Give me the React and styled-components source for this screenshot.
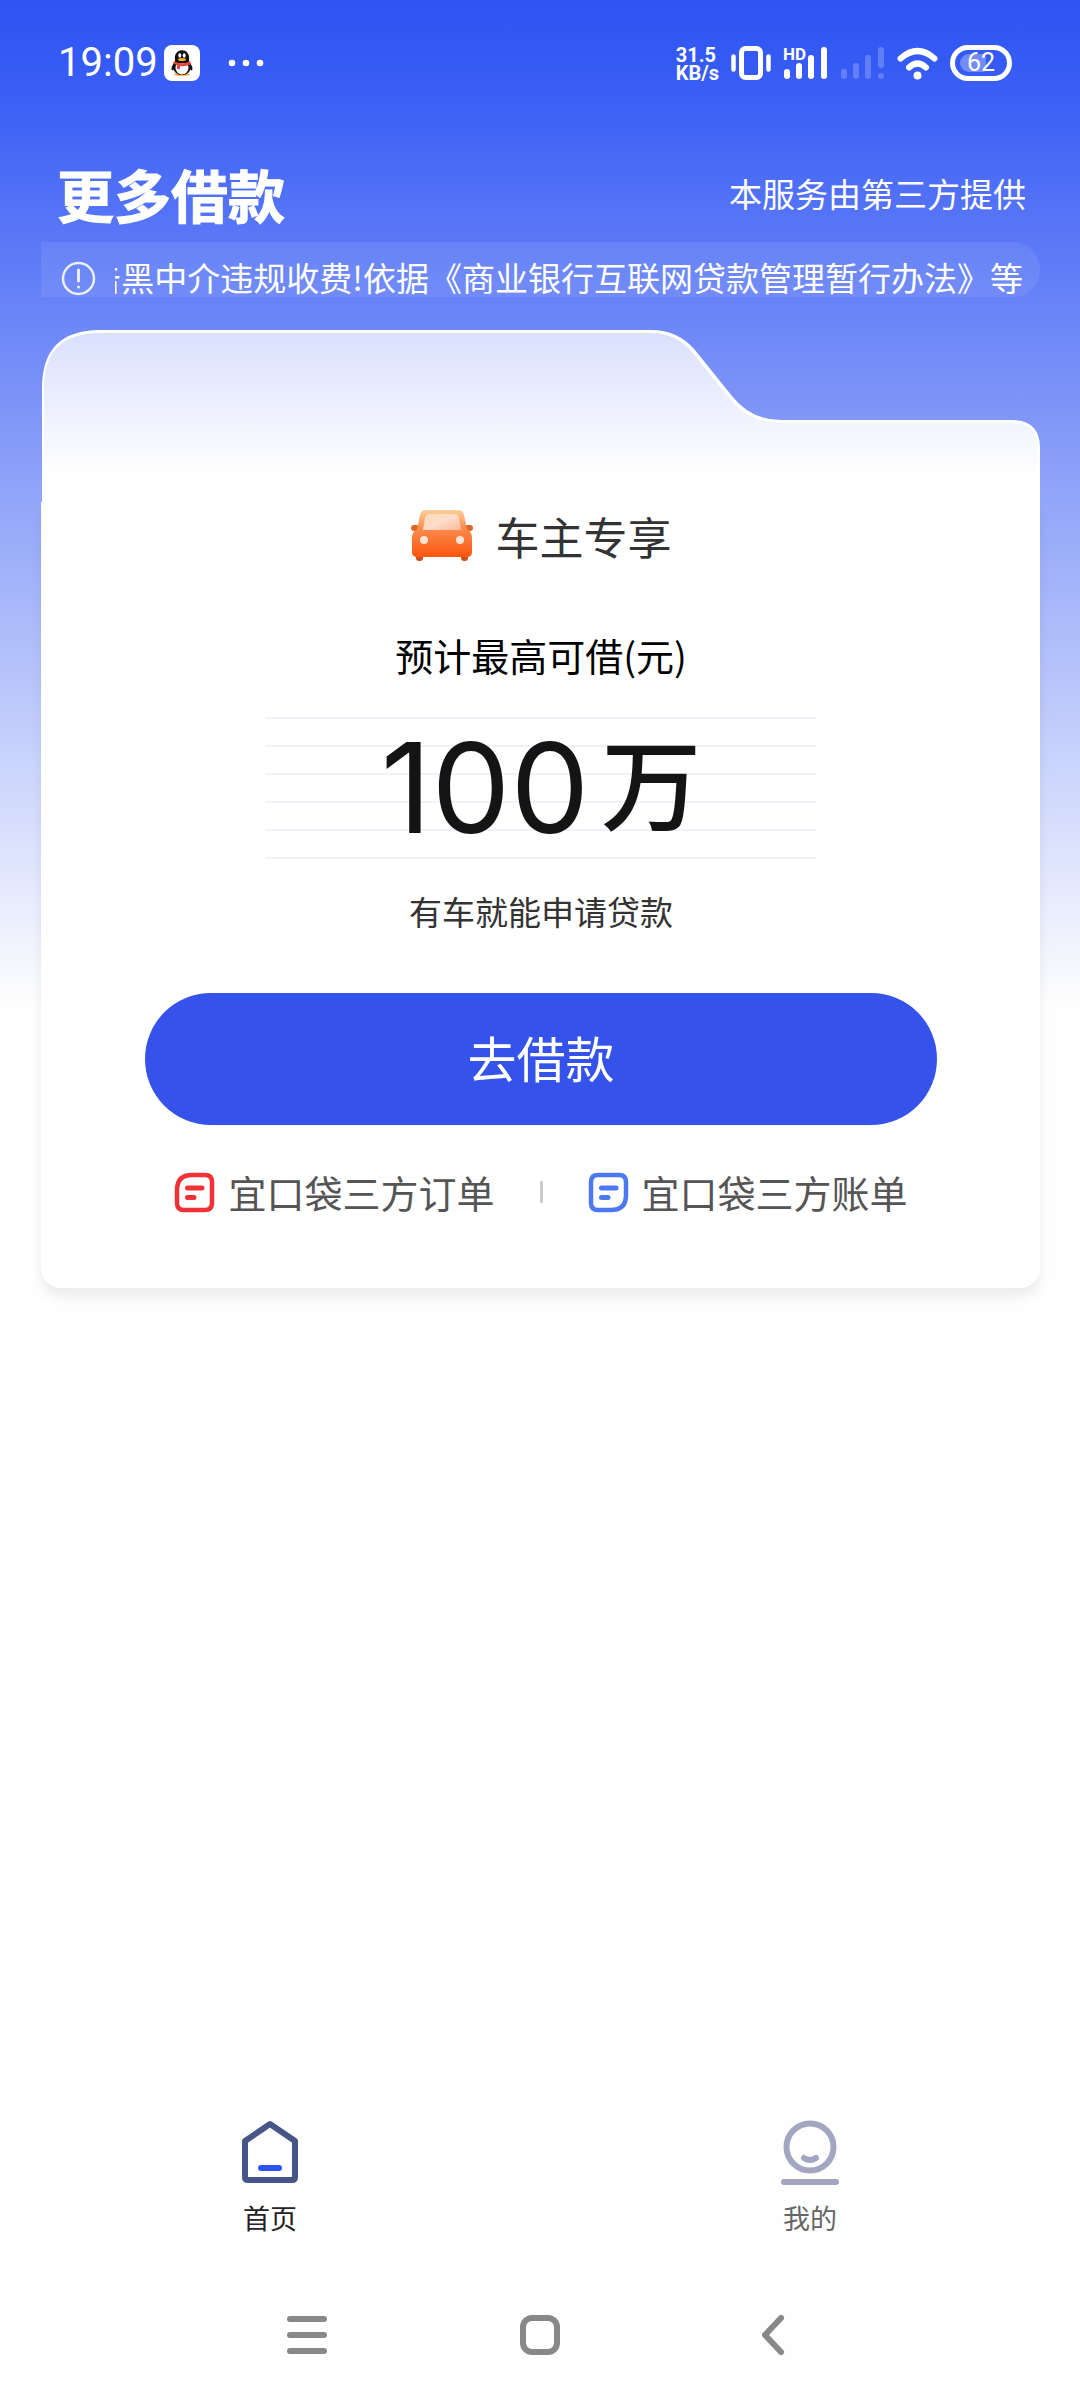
import styled, { createGlobalStyle } from "styled-components";

const GlobalStyle = createGlobalStyle`
	* {
		box-sizing: border-box;
	}

	body {
		margin: 0;
		font-family: "Noto Sans CJK SC", "Noto Sans", sans-serif;
		background-color: #fefefe;
	}

	button {
		border: none;
		padding: 0;
		background: none;
		font-family: inherit;
		cursor: pointer;
	}

	svg {
		display: block;
	}
`;

const Page = styled.div`
	min-height: 100vh;
	display: flex;
	flex-direction: column;
	background: linear-gradient(#2d54f2 0, #385cf5 80px, #fefefe 1006px);
`;

/* Status bar */

const StatusBar = styled.div`
	display: flex;
	justify-content: space-between;
	align-items: center;
	height: 126px;
	padding: 0 68px 0 58px;
	font-family: Roboto, sans-serif;
	color: #fff;
`;

const StatusGroup = styled.div`
	display: flex;
	align-items: center;
	gap: ${(props) => props.$gap}px;
`;

const Time = styled.span`
	font-size: 40px;
	line-height: 48px;
`;

const Speed = styled.div`
	display: flex;
	flex-direction: column;
	padding-top: 2px;
	font-size: 20px;
	font-weight: 700;
	line-height: 18px;
`;

const Signal = styled.div`
	position: relative;
`;

const HdBadge = styled.span`
	position: absolute;
	top: 0;
	left: 0;
	font-size: 17px;
	font-weight: 700;
	line-height: 18px;
`;

const Battery = styled.div`
	position: relative;
	display: flex;
	align-items: center;
	justify-content: center;
	width: 62px;
	height: 36px;
	border: 5px solid #fff;
	border-radius: 18px;
	font-size: 25px;
	line-height: 26px;

	&::before {
		content: "";
		position: absolute;
		top: 4px;
		bottom: 4px;
		left: 5px;
		width: 26px;
		border-radius: 9px 4px 4px 9px;
		background-color: rgba(255, 255, 255, 0.3);
	}
`;

/* Header */

const Header = styled.header`
	display: flex;
	justify-content: space-between;
	align-items: center;
	height: 116px;
	padding: 18px 54px 0 57px;
	color: #fff;
`;

const Title = styled.h1`
	margin: 0;
	font-size: 57px;
	font-weight: 700;
	line-height: 64px;
	-webkit-text-stroke: 1px #fff;
`;

const Provider = styled.span`
	font-size: 33px;
	line-height: 48px;
`;

const Notice = styled.div`
	display: flex;
	align-items: center;
	gap: 19px;
	height: 55px;
	margin: 0 40px 33px 41px;
	padding: 18px 17px 0 20px;
	border-radius: 0 28px 28px 0;
	background-color: rgba(255, 255, 255, 0.08);
	color: #fff;

	svg {
		flex-shrink: 0;
	}
`;

const Marquee = styled.div`
	flex: 1;
	display: flex;
	justify-content: flex-end;
	padding-bottom: 4px;
	overflow: hidden;
	font-size: 33px;
	line-height: 36px;
	white-space: nowrap;
`;

/* Card */

const Card = styled.section`
	margin: 0 40px 0 41px;
`;

const FolderTop = styled.svg`
	width: 100%;
	height: auto;
`;

const CardBody = styled.div`
	display: flex;
	flex-direction: column;
	align-items: center;
	padding: 6px 103px 68px 104px;
	border-radius: 0 0 20px 20px;
	background-color: #fff;
	box-shadow: 0 9px 12px rgba(0, 0, 0, 0.07);
`;

const Product = styled.h2`
	display: flex;
	align-items: center;
	gap: 23px;
	margin: 0;
	font-size: 44px;
	font-weight: 400;
	line-height: 56px;
	color: #333;
`;

const Caption = styled.p`
	margin: 63px 0 34px;
	font-size: 38px;
	line-height: 56px;
	color: #000;
`;

const AmountBox = styled.div`
	display: flex;
	justify-content: center;
	align-items: flex-start;
	gap: 12px;
	width: 550px;
	height: 142px;
	background: repeating-linear-gradient(#f1f1fb 0 2px, transparent 2px 28px);
	color: #141414;
`;

const Amount = styled.span`
	font-family: "Inter", sans-serif;
	font-size: 125px;
	line-height: 142px;
`;

const Unit = styled.span`
	font-size: 100px;
	font-weight: 500;
	line-height: 126px;
`;

const Hint = styled.p`
	margin: 28px 0 58px;
	font-size: 33px;
	line-height: 48px;
	color: #333;
`;

const PrimaryButton = styled.button`
	width: 100%;
	height: 132px;
	padding-bottom: 6px;
	border-radius: 66px;
	background-color: #3553eb;
	font-size: 49px;
	color: #fff;
`;

const Links = styled.div`
	display: flex;
	align-items: center;
	gap: 45px;
	margin-top: 39px;
`;

const RecordLink = styled.a`
	display: flex;
	align-items: center;
	gap: 13px;
	font-size: 38px;
	line-height: 56px;
	color: #555;
	text-decoration: none;
`;

const Divider = styled.span`
	width: 3px;
	height: 22px;
	background-color: #ccc;
`;

/* Bottom bars */

const TabBar = styled.nav`
	display: flex;
	margin-top: auto;
	padding-bottom: 79px;
`;

const Tab = styled.a`
	flex: 1;
	display: flex;
	flex-direction: column;
	align-items: center;
	gap: 14px;
	font-size: 27px;
	line-height: 36px;
	color: ${(props) => (props.$active ? "#222" : "#666")};
	text-decoration: none;
`;

const SystemNav = styled.div`
	display: flex;
	justify-content: center;
	gap: 193px;
	padding-bottom: 45px;
`;

// x and top of each signal bar
const bars = [
	[4, 25],
	[16, 19],
	[28, 11],
	[41, 3],
];

function QQIcon() {
	return (
		<svg width="36" height="36" viewBox="0 0 36 36">
			<rect width="36" height="36" rx="8" fill="#fff" />
			<ellipse cx="18" cy="29.5" rx="8" ry="1.5" fill="#f5a623" />
			<path d="M10 18C7 22 7 25 8.5 25.5L11 23ZM26 18c3 4 3 7 1.5 7.5L25 23Z" fill="#111" />
			<ellipse cx="18" cy="22" rx="9" ry="8" fill="#111" />
			<ellipse cx="18" cy="23" rx="6.5" ry="6.5" fill="#fff" />
			<path d="M11 15c-2-13 16-13 14 0v3H11Z" fill="#111" />
			<ellipse cx="15.8" cy="10.5" rx="1.5" ry="2.2" fill="#fff" />
			<ellipse cx="20.2" cy="10.5" rx="1.5" ry="2.2" fill="#fff" />
			<ellipse cx="18" cy="14.5" rx="4" ry="1.5" fill="#f5b01e" />
			<path d="M10 16c5 3 11 3 16 0l1 3c-4 2-8 2.5-11 2v3h-3v-4l-4-1.5Z" fill="#e8433c" />
		</svg>
	);
}

function CarIcon() {
	return (
		<svg width="62" height="52" viewBox="0 0 62 52">
			<defs>
				<linearGradient id="car" x1="0" y1="0" x2="0" y2="1">
					<stop offset="0" stopColor="#fbcf9b" />
					<stop offset="0.4" stopColor="#fb8a4c" />
					<stop offset="1" stopColor="#fd5510" />
				</linearGradient>
				<linearGradient id="glass" x1="0" y1="0" x2="1" y2="1">
					<stop offset="0" stopColor="#fbdcb8" />
					<stop offset="0.5" stopColor="#fddccb" />
					<stop offset="1" stopColor="#fcb999" />
				</linearGradient>
			</defs>
			<rect x="5" y="42" width="7" height="9" rx="3" fill="#c9521f" />
			<rect x="50" y="42" width="7" height="9" rx="3" fill="#c9521f" />
			<rect x="0" y="15" width="10" height="6" rx="3" fill="#e0632b" />
			<rect x="52" y="15" width="10" height="6" rx="3" fill="#e0632b" />
			<path d="M15 0h32q5 0 6 5l3 14q5 3 5 9v14q0 5-5 5H6q-5 0-5-5V28q0-6 5-9l3-14q1-5 6-5Z" fill="url(#car)" />
			<path d="M19 4h24q4 0 5 4l2 12H12l2-12q1-4 5-4Z" fill="url(#glass)" />
			<circle cx="13" cy="30" r="4" fill="#ffe4d2" />
			<circle cx="49" cy="30" r="4" fill="#ffe4d2" />
		</svg>
	);
}

function BillIcon({ color, flip }) {
	return (
		<svg width="41" height="41" viewBox="0 0 41 41" fill="none" stroke={color} strokeLinecap="round">
			<path
				d="M18 3h13q7 0 7 7v21q0 7-7 7H10q-7 0-7-7V18Q3 3 18 3Z"
				strokeWidth="4.5"
				transform={flip ? "rotate(180 20.5 20.5)" : undefined}
			/>
			<path d="M13.5 16H28M13.5 25.5H20" strokeWidth="5" />
		</svg>
	);
}

function App() {
	return (
		<>
			<GlobalStyle />
			<Page>
				<StatusBar>
					<StatusGroup $gap={6}>
						<Time>19:09</Time>
						<QQIcon />
						<svg width="60" height="8" viewBox="0 0 60 8" fill="#fff">
							<circle cx="26" cy="4" r="3.3" />
							<circle cx="40" cy="4" r="3.3" />
							<circle cx="54" cy="4" r="3.3" />
						</svg>
					</StatusGroup>
					<StatusGroup $gap={12}>
						<Speed>
							<span>31.5</span>
							<span>KB/s</span>
						</Speed>
						<svg width="40" height="36" viewBox="0 0 40 36" fill="none" stroke="#fff" strokeLinecap="round">
							<rect x="10.5" y="3.5" width="19" height="29" rx="4" strokeWidth="5" />
							<path d="M2.5 11.5v13M37.5 11.5v13" strokeWidth="4.5" />
						</svg>
						<Signal>
							<HdBadge>HD</HdBadge>
							<svg width="45" height="36" viewBox="0 0 45 36" stroke="#fff" strokeWidth="6" strokeLinecap="round">
								{bars.map(([x, y]) => (
									<path key={x} d={`M${x} ${y + 2}V31`} />
								))}
							</svg>
						</Signal>
						<svg width="45" height="36" viewBox="0 0 45 36" stroke="#fff" strokeWidth="6" strokeLinecap="round" opacity="0.22">
							<path d="M4 27v4M16 21v10M28 13v18M41 5v15M41 31v0" />
						</svg>
						<svg width="41" height="36" viewBox="0 0 41 36" fill="none" stroke="#fff" strokeWidth="6" strokeLinecap="round">
							<path d="M3.5 13.5q17-15 34 0M12 22.5q8.5-8 17 0" />
							<circle cx="20.5" cy="30.5" r="4" fill="#fff" stroke="none" />
						</svg>
						<Battery>62</Battery>
					</StatusGroup>
				</StatusBar>

				<Header>
					<Title>更多借款</Title>
					<Provider>本服务由第三方提供</Provider>
				</Header>

				<Notice>
					<svg width="35" height="35" viewBox="0 0 35 35" fill="none" stroke="#fff" strokeOpacity="0.85" strokeLinecap="round">
						<circle cx="17.5" cy="17.5" r="15.5" strokeWidth="2.5" />
						<path d="M17.5 9v11M17.5 26v0" strokeWidth="3" />
					</svg>
					<Marquee>
						<span>击黑中介违规收费!依据《商业银行互联网贷款管理暂行办法》等</span>
					</Marquee>
				</Notice>

				<Card>
					<FolderTop viewBox="0 0 999 172">
						<defs>
							<linearGradient id="folder" x1="0" y1="0" x2="0" y2="1">
								<stop offset="0" stopColor="#dae0fd" />
								<stop offset="0.85" stopColor="#fff" />
							</linearGradient>
						</defs>
						<path
							d="M1 172V58Q1 0 59 0H610Q637 0 654 20L691 66Q710 90 740 90H971Q999 90 999 118V172Z"
							fill="#fff"
						/>
						<path
							d="M3 172V58Q3 3 59 3H610Q635 3 651 22L688 68Q708 93 740 93H971Q997 93 997 118V172Z"
							fill="url(#folder)"
						/>
					</FolderTop>
					<CardBody>
						<Product>
							<CarIcon />
							车主专享
						</Product>
						<Caption>预计最高可借(元)</Caption>
						<AmountBox>
							<Amount>100</Amount>
							<Unit>万</Unit>
						</AmountBox>
						<Hint>有车就能申请贷款</Hint>
						<PrimaryButton type="button">去借款</PrimaryButton>
						<Links>
							<RecordLink href="#orders">
								<BillIcon color="#f03237" />
								宜口袋三方订单
							</RecordLink>
							<Divider />
							<RecordLink href="#bills">
								<BillIcon color="#4c78f0" flip />
								宜口袋三方账单
							</RecordLink>
						</Links>
					</CardBody>
				</Card>

				<TabBar>
					<Tab href="#home" $active>
						<svg width="60" height="66" viewBox="0 0 60 66" fill="none" strokeWidth="6" strokeLinecap="round" strokeLinejoin="round">
							<path d="M30 4L5 21V57q0 3 3 3H52q3 0 3-3V21Z" stroke="#475687" />
							<path d="M21 48H39" stroke="#2f54f5" />
						</svg>
						首页
					</Tab>
					<Tab href="#mine">
						<svg width="60" height="66" viewBox="0 0 60 66" fill="none" stroke="#a3a6c0" strokeWidth="6" strokeLinecap="round">
							<circle cx="30" cy="27" r="23.5" />
							<path d="M24 38q6 4 12 0M4 62H56" />
						</svg>
						我的
					</Tab>
				</TabBar>

				<SystemNav>
					<button type="button" aria-label="Recent apps">
						<svg width="40" height="40" viewBox="0 0 40 40" stroke="#888" strokeWidth="6" strokeLinecap="round">
							<path d="M3 4H37M3 20H37M3 36H37" />
						</svg>
					</button>
					<button type="button" aria-label="Home">
						<svg width="40" height="40" viewBox="0 0 40 40" fill="none" stroke="#888" strokeWidth="6">
							<rect x="3" y="3" width="34" height="34" rx="9" />
						</svg>
					</button>
					<button type="button" aria-label="Back">
						<svg width="40" height="40" viewBox="0 0 40 40" fill="none" stroke="#888" strokeWidth="6" strokeLinecap="round" strokeLinejoin="round">
							<path d="M28 3L12 20L28 37" />
						</svg>
					</button>
				</SystemNav>
			</Page>
		</>
	);
}

export default App;
